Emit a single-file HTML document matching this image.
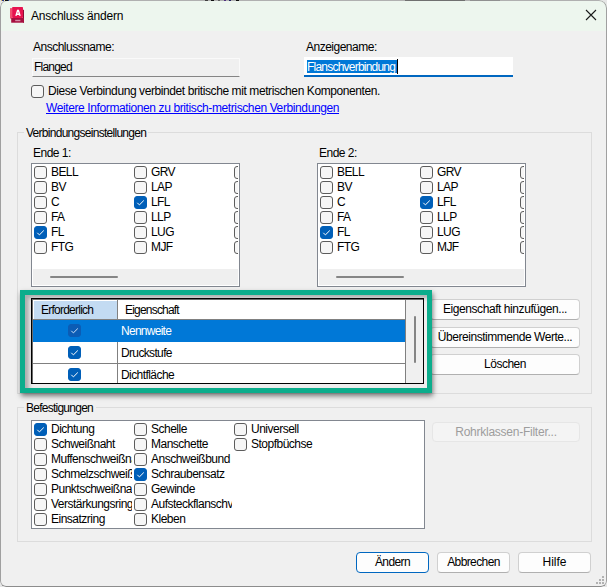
<!DOCTYPE html>
<html><head><meta charset="utf-8"><style>
html,body{margin:0;padding:0;width:607px;height:587px;overflow:hidden;background:#e6e6e6;}
*{box-sizing:border-box;}
#win{position:absolute;left:0;top:0;width:607px;height:587px;border-radius:7px 8px 6px 6px;background:#f0f0f0;overflow:hidden;}
#frame{position:absolute;left:0;top:0;width:607px;height:587px;border:1px solid #a0a0a0;border-top-color:#b0b0b0;border-bottom-color:#8c8c8c;border-radius:7px 8px 6px 6px;}
#title{position:absolute;left:0;top:0;width:607px;height:31px;background:#edf6ee;}
.a{position:absolute;}
.t{position:absolute;font-family:"Liberation Sans",sans-serif;font-size:12px;line-height:12px;white-space:nowrap;color:#000;letter-spacing:-0.45px;}
.grp{position:absolute;border:1px solid #dcdcdc;}
.lb{position:absolute;border:1px solid #828790;background:#fff;overflow:hidden;}
.cb{position:absolute;width:13px;height:13px;border:1px solid #5c5c5c;border-radius:3px;background:#f6f6f6;}
.cb.on{background:#005fb8;border-color:#005fb8;}
.btn{position:absolute;height:21px;border:1px solid #d0d0d0;border-bottom-color:#b0b0b0;border-radius:4px;background:#fdfdfd;}
.bt{position:absolute;left:0;right:0;text-align:center;font-family:"Liberation Sans",sans-serif;font-size:12px;line-height:12px;white-space:nowrap;letter-spacing:-0.45px;color:#000;}
</style></head><body><div id="win"><div id='title'></div><svg class='a' style='left:8px;top:5px' width='18' height='20' viewBox='0 0 18 20'><rect x='2' y='3.1' width='2.2' height='10.5' fill='#f0506f'/><rect x='15' y='4.8' width='1' height='12.9' fill='#8e0b33'/><rect x='3.2' y='13' width='12.8' height='4.7' fill='#a50f3e'/><rect x='4.1' y='1.9' width='10.9' height='11.2' rx='0.8' fill='#e7134f'/><path d='M7.9 10.9 L9.5 5.8 Q10 4.6 10.5 5.8 L12.1 10.9 M9 9.2 L11 9.2' stroke='#fff' stroke-width='1.4' fill='none' stroke-linejoin='round'/><rect x='7.2' y='14.8' width='5.2' height='1.4' fill='#d98aa6'/></svg><div class='t' style='left:31px;top:10px;letter-spacing:-0.2px;'>Anschluss ändern</div><svg class='a' style='left:585px;top:9px;' width='12' height='12'><path d='M1 1L11 11M11 1L1 11' stroke='#1a1a1a' stroke-width='1.1'/></svg><div class='t' style='left:33px;top:41px;letter-spacing:-0.5px;'>Anschlussname:</div><div class='a' style='left:32px;top:58px;width:208px;height:19px;border:1px solid #fafafa;border-bottom-color:#858585;border-radius:1px;background:#f0f0f0;'></div><div class='t' style='left:34px;top:61px;letter-spacing:-0.8px;'>Flanged</div><div class='t' style='left:306px;top:41px;letter-spacing:-0.5px;'>Anzeigename:</div><div class='a' style='left:304px;top:57px;width:209px;height:20px;background:#fff;border-bottom:2px solid #0067c0;'></div><div class='a' style='left:307px;top:60px;width:90px;height:13px;background:#0078d7;'></div><div class='t' style='left:307px;top:61px;color:#fff;letter-spacing:-0.78px;'>Flanschverbindung</div><div class='a' style='left:397px;top:59px;width:1px;height:15px;background:#000;'></div><div class='cb' style='left:31px;top:85px;'></div><div class='t' style='left:48px;top:85px;letter-spacing:-0.41px;'>Diese Verbindung verbindet britische mit metrischen Komponenten.</div><div class='t' style='left:46px;top:102px;color:#0000ff;text-decoration:underline;letter-spacing:-0.39px;'>Weitere Informationen zu britisch-metrischen Verbindungen</div><div class='grp' style='left:17px;top:132px;width:575px;height:262px;'></div><div class='a' style='left:24px;top:126px;width:124px;height:14px;background:#f0f0f0;'></div><div class='t' style='left:26px;top:127px;letter-spacing:-0.72px;'>Verbindungseinstellungen</div><div class='t' style='left:33px;top:147px;letter-spacing:-0.5px;'>Ende 1:</div><div class='t' style='left:319px;top:147px;letter-spacing:-0.5px;'>Ende 2:</div><div class='lb' style='left:31px;top:163px;width:209px;height:124px;'><div class='cb' style='left:2px;top:2px;'></div><div class='t' style='left:19px;top:2px;letter-spacing:-0.6px;'>BELL</div><div class='cb' style='left:102px;top:2px;'></div><div class='t' style='left:119px;top:2px;letter-spacing:-0.6px;'>GRV</div><div class='a' style='left:200px;top:2px;width:6px;height:13px;overflow:hidden;'><div class='cb' style='left:2px;top:0px;'></div></div><div class='cb' style='left:2px;top:17px;'></div><div class='t' style='left:19px;top:17px;letter-spacing:-0.6px;'>BV</div><div class='cb' style='left:102px;top:17px;'></div><div class='t' style='left:119px;top:17px;letter-spacing:-0.6px;'>LAP</div><div class='a' style='left:200px;top:17px;width:6px;height:13px;overflow:hidden;'><div class='cb' style='left:2px;top:0px;'></div></div><div class='cb' style='left:2px;top:32px;'></div><div class='t' style='left:19px;top:32px;letter-spacing:-0.6px;'>C</div><div class='cb on' style='left:102px;top:32px;'><svg width='13' height='13' style='position:absolute;left:-1px;top:-1px'><path d='M3.3 6.8 L5.4 8.9 L9.8 4.5' stroke='#fff' stroke-width='1' fill='none'/></svg></div><div class='t' style='left:119px;top:32px;letter-spacing:-0.6px;'>LFL</div><div class='a' style='left:200px;top:32px;width:6px;height:13px;overflow:hidden;'><div class='cb' style='left:2px;top:0px;'></div></div><div class='cb' style='left:2px;top:47px;'></div><div class='t' style='left:19px;top:47px;letter-spacing:-0.6px;'>FA</div><div class='cb' style='left:102px;top:47px;'></div><div class='t' style='left:119px;top:47px;letter-spacing:-0.6px;'>LLP</div><div class='a' style='left:200px;top:47px;width:6px;height:13px;overflow:hidden;'><div class='cb' style='left:2px;top:0px;'></div></div><div class='cb on' style='left:2px;top:62px;'><svg width='13' height='13' style='position:absolute;left:-1px;top:-1px'><path d='M3.3 6.8 L5.4 8.9 L9.8 4.5' stroke='#fff' stroke-width='1' fill='none'/></svg></div><div class='t' style='left:19px;top:62px;letter-spacing:-0.6px;'>FL</div><div class='cb' style='left:102px;top:62px;'></div><div class='t' style='left:119px;top:62px;letter-spacing:-0.6px;'>LUG</div><div class='a' style='left:200px;top:62px;width:6px;height:13px;overflow:hidden;'><div class='cb' style='left:2px;top:0px;'></div></div><div class='cb' style='left:2px;top:77px;'></div><div class='t' style='left:19px;top:77px;letter-spacing:-0.6px;'>FTG</div><div class='cb' style='left:102px;top:77px;'></div><div class='t' style='left:119px;top:77px;letter-spacing:-0.6px;'>MJF</div><div class='a' style='left:200px;top:77px;width:6px;height:13px;overflow:hidden;'><div class='cb' style='left:2px;top:0px;'></div></div><div class='a' style='left:1px;top:105px;width:205px;height:16px;background:#efefef;'></div><div class='a' style='left:18px;top:112px;width:68px;height:2px;background:#858585;border-radius:1px;'></div></div><div class='lb' style='left:317px;top:163px;width:209px;height:124px;'><div class='cb' style='left:2px;top:2px;'></div><div class='t' style='left:19px;top:2px;letter-spacing:-0.6px;'>BELL</div><div class='cb' style='left:102px;top:2px;'></div><div class='t' style='left:119px;top:2px;letter-spacing:-0.6px;'>GRV</div><div class='a' style='left:200px;top:2px;width:6px;height:13px;overflow:hidden;'><div class='cb' style='left:2px;top:0px;'></div></div><div class='cb' style='left:2px;top:17px;'></div><div class='t' style='left:19px;top:17px;letter-spacing:-0.6px;'>BV</div><div class='cb' style='left:102px;top:17px;'></div><div class='t' style='left:119px;top:17px;letter-spacing:-0.6px;'>LAP</div><div class='a' style='left:200px;top:17px;width:6px;height:13px;overflow:hidden;'><div class='cb' style='left:2px;top:0px;'></div></div><div class='cb' style='left:2px;top:32px;'></div><div class='t' style='left:19px;top:32px;letter-spacing:-0.6px;'>C</div><div class='cb on' style='left:102px;top:32px;'><svg width='13' height='13' style='position:absolute;left:-1px;top:-1px'><path d='M3.3 6.8 L5.4 8.9 L9.8 4.5' stroke='#fff' stroke-width='1' fill='none'/></svg></div><div class='t' style='left:119px;top:32px;letter-spacing:-0.6px;'>LFL</div><div class='a' style='left:200px;top:32px;width:6px;height:13px;overflow:hidden;'><div class='cb' style='left:2px;top:0px;'></div></div><div class='cb' style='left:2px;top:47px;'></div><div class='t' style='left:19px;top:47px;letter-spacing:-0.6px;'>FA</div><div class='cb' style='left:102px;top:47px;'></div><div class='t' style='left:119px;top:47px;letter-spacing:-0.6px;'>LLP</div><div class='a' style='left:200px;top:47px;width:6px;height:13px;overflow:hidden;'><div class='cb' style='left:2px;top:0px;'></div></div><div class='cb on' style='left:2px;top:62px;'><svg width='13' height='13' style='position:absolute;left:-1px;top:-1px'><path d='M3.3 6.8 L5.4 8.9 L9.8 4.5' stroke='#fff' stroke-width='1' fill='none'/></svg></div><div class='t' style='left:19px;top:62px;letter-spacing:-0.6px;'>FL</div><div class='cb' style='left:102px;top:62px;'></div><div class='t' style='left:119px;top:62px;letter-spacing:-0.6px;'>LUG</div><div class='a' style='left:200px;top:62px;width:6px;height:13px;overflow:hidden;'><div class='cb' style='left:2px;top:0px;'></div></div><div class='cb' style='left:2px;top:77px;'></div><div class='t' style='left:19px;top:77px;letter-spacing:-0.6px;'>FTG</div><div class='cb' style='left:102px;top:77px;'></div><div class='t' style='left:119px;top:77px;letter-spacing:-0.6px;'>MJF</div><div class='a' style='left:200px;top:77px;width:6px;height:13px;overflow:hidden;'><div class='cb' style='left:2px;top:0px;'></div></div><div class='a' style='left:1px;top:105px;width:205px;height:16px;background:#efefef;'></div><div class='a' style='left:18px;top:112px;width:68px;height:2px;background:#858585;border-radius:1px;'></div></div><div class='btn' style='left:430px;top:299px;width:150px;'><div class='bt' style='top:3px;letter-spacing:-0.43px;'>Eigenschaft hinzufügen...</div></div><div class='btn' style='left:430px;top:327px;width:150px;'><div class='bt' style='top:3px;letter-spacing:-0.46px;'>Übereinstimmende Werte...</div></div><div class='btn' style='left:430px;top:354px;width:150px;'><div class='bt' style='top:3px;letter-spacing:-0.5px;'>Löschen</div></div><div class='a' style='left:20px;top:290px;width:412px;height:103px;border:5px solid #0cad8c;box-shadow:1px 3px 5px rgba(0,0,0,0.5);'></div><div class='a' style='left:25px;top:295px;width:402px;height:93px;background:#eeeeee;box-shadow:inset 4px 3px 4px rgba(0,0,0,0.28);'></div><div class='a' style='left:31px;top:298px;width:393px;height:86px;border:1px solid #000;background:#fff;overflow:hidden;'><div class='a' style='left:0;top:0;width:391px;height:1px;background:#6a6a6a;'></div><div class='a' style='left:0;top:0;width:1px;height:84px;background:#6a6a6a;'></div><div class='a' style='left:1px;top:1px;width:84px;height:19px;background:#c3dbf2;border-left:1px solid #fff;border-top:1px solid #fff;'></div><div class='a' style='left:85px;top:1px;width:1px;height:83px;background:#808080;'></div><div class='a' style='left:1px;top:20px;width:372px;height:1px;background:#808080;'></div><div class='a' style='left:1px;top:21px;width:372px;height:22px;background:#0078d7;'></div><div class='a' style='left:1px;top:64px;width:372px;height:1px;background:#808080;'></div><div class='a' style='left:373px;top:1px;width:1px;height:83px;background:#808080;'></div><div class='a' style='left:374px;top:1px;width:17px;height:83px;background:#f0f0f0;'></div><div class='a' style='left:382px;top:17px;width:2px;height:47px;background:#858585;border-radius:1px;'></div></div><div class='t' style='left:41px;top:304px;letter-spacing:-0.76px;'>Erforderlich</div><div class='t' style='left:125px;top:304px;letter-spacing:-0.8px;'>Eigenschaft</div><div class='cb on' style='left:68px;top:324px;background:#0b5cb5;border-color:#0b5cb5;'><svg width='13' height='13' style='position:absolute;left:-1px;top:-1px'><path d='M3.3 6.8 L5.4 8.9 L9.8 4.5' stroke='#cfe2f7' stroke-width='1' fill='none'/></svg></div><div class='t' style='left:121px;top:325px;color:#fff;letter-spacing:-0.73px;'>Nennweite</div><div class='cb on' style='left:68px;top:346px;'><svg width='13' height='13' style='position:absolute;left:-1px;top:-1px'><path d='M3.3 6.8 L5.4 8.9 L9.8 4.5' stroke='#fff' stroke-width='1' fill='none'/></svg></div><div class='t' style='left:121px;top:347px;letter-spacing:-0.65px;'>Druckstufe</div><div class='cb on' style='left:68px;top:368px;'><svg width='13' height='13' style='position:absolute;left:-1px;top:-1px'><path d='M3.3 6.8 L5.4 8.9 L9.8 4.5' stroke='#fff' stroke-width='1' fill='none'/></svg></div><div class='t' style='left:121px;top:369px;letter-spacing:-0.57px;'>Dichtfläche</div><div class='grp' style='left:17px;top:407px;width:575px;height:135px;'></div><div class='a' style='left:24px;top:401px;width:72px;height:14px;background:#f0f0f0;'></div><div class='t' style='left:26px;top:402px;letter-spacing:-0.75px;'>Befestigungen</div><div class='lb' style='left:31px;top:420px;width:394px;height:109px;'><div class='a' style='left:0;top:0;width:100px;height:107px;overflow:hidden;'><div class='cb on' style='left:2px;top:2px;'><svg width='13' height='13' style='position:absolute;left:-1px;top:-1px'><path d='M3.3 6.8 L5.4 8.9 L9.8 4.5' stroke='#fff' stroke-width='1' fill='none'/></svg></div><div class='t' style='left:19px;top:2px;letter-spacing:-0.5px;'>Dichtung</div></div><div class='a' style='left:0;top:0;width:100px;height:107px;overflow:hidden;'><div class='cb' style='left:2px;top:17px;'></div><div class='t' style='left:19px;top:17px;letter-spacing:-0.5px;'>Schweißnaht</div></div><div class='a' style='left:0;top:0;width:100px;height:107px;overflow:hidden;'><div class='cb' style='left:2px;top:32px;'></div><div class='t' style='left:19px;top:32px;letter-spacing:-0.5px;'>Muffenschweißnaht</div></div><div class='a' style='left:0;top:0;width:100px;height:107px;overflow:hidden;'><div class='cb' style='left:2px;top:47px;'></div><div class='t' style='left:19px;top:47px;letter-spacing:-0.5px;'>Schmelzschweißung</div></div><div class='a' style='left:0;top:0;width:100px;height:107px;overflow:hidden;'><div class='cb' style='left:2px;top:62px;'></div><div class='t' style='left:19px;top:62px;letter-spacing:-0.5px;'>Punktschweißnaht</div></div><div class='a' style='left:0;top:0;width:100px;height:107px;overflow:hidden;'><div class='cb' style='left:2px;top:77px;'></div><div class='t' style='left:19px;top:77px;letter-spacing:-0.5px;'>Verstärkungsring</div></div><div class='a' style='left:0;top:0;width:100px;height:107px;overflow:hidden;'><div class='cb' style='left:2px;top:92px;'></div><div class='t' style='left:19px;top:92px;letter-spacing:-0.5px;'>Einsatzring</div></div><div class='a' style='left:100px;top:0;width:100px;height:107px;overflow:hidden;'><div class='cb' style='left:2px;top:2px;'></div><div class='t' style='left:19px;top:2px;letter-spacing:-0.5px;'>Schelle</div></div><div class='a' style='left:100px;top:0;width:100px;height:107px;overflow:hidden;'><div class='cb' style='left:2px;top:17px;'></div><div class='t' style='left:19px;top:17px;letter-spacing:-0.5px;'>Manschette</div></div><div class='a' style='left:100px;top:0;width:100px;height:107px;overflow:hidden;'><div class='cb' style='left:2px;top:32px;'></div><div class='t' style='left:19px;top:32px;letter-spacing:-0.5px;'>Anschweißbund</div></div><div class='a' style='left:100px;top:0;width:100px;height:107px;overflow:hidden;'><div class='cb on' style='left:2px;top:47px;'><svg width='13' height='13' style='position:absolute;left:-1px;top:-1px'><path d='M3.3 6.8 L5.4 8.9 L9.8 4.5' stroke='#fff' stroke-width='1' fill='none'/></svg></div><div class='t' style='left:19px;top:47px;letter-spacing:-0.5px;'>Schraubensatz</div></div><div class='a' style='left:100px;top:0;width:100px;height:107px;overflow:hidden;'><div class='cb' style='left:2px;top:62px;'></div><div class='t' style='left:19px;top:62px;letter-spacing:-0.5px;'>Gewinde</div></div><div class='a' style='left:100px;top:0;width:100px;height:107px;overflow:hidden;'><div class='cb' style='left:2px;top:77px;'></div><div class='t' style='left:19px;top:77px;letter-spacing:-0.5px;'>Aufsteckflanschverbindung</div></div><div class='a' style='left:100px;top:0;width:100px;height:107px;overflow:hidden;'><div class='cb' style='left:2px;top:92px;'></div><div class='t' style='left:19px;top:92px;letter-spacing:-0.5px;'>Kleben</div></div><div class='cb' style='left:202px;top:2px;'></div><div class='t' style='left:219px;top:2px;letter-spacing:-0.5px;'>Universell</div><div class='cb' style='left:202px;top:17px;'></div><div class='t' style='left:219px;top:17px;letter-spacing:-0.5px;'>Stopfbüchse</div></div><div class='btn' style='left:432px;top:422px;width:148px;height:20px;background:#f4f4f4;border-color:#e6e6e6;'><div class='bt' style='top:3px;color:#9d9d9d;letter-spacing:-0.25px;'>Rohrklassen-Filter...</div></div><div class='btn' style='left:356px;top:552px;width:73px;border:1.5px solid #0067c0;'><div class='bt' style='top:3px;letter-spacing:-0.6px;'>Ändern</div></div><div class='btn' style='left:437px;top:552px;width:73px;'><div class='bt' style='top:3px;letter-spacing:-0.6px;'>Abbrechen</div></div><div class='btn' style='left:518px;top:552px;width:73px;'><div class='bt' style='top:3px;letter-spacing:0px;'>Hilfe</div></div><div class='a' style='left:602px;top:576px;width:2px;height:2px;background:#b2b2b2;'></div><div class='a' style='left:602px;top:579px;width:2px;height:2px;background:#b2b2b2;'></div><div class='a' style='left:599px;top:579px;width:2px;height:2px;background:#b2b2b2;'></div><div class='a' style='left:602px;top:582px;width:2px;height:2px;background:#b2b2b2;'></div><div class='a' style='left:599px;top:582px;width:2px;height:2px;background:#b2b2b2;'></div><div class='a' style='left:596px;top:582px;width:2px;height:2px;background:#b2b2b2;'></div><div id="frame"></div></div><div class='a' style='left:1px;top:0;width:1px;height:1px;background:#e0b860;'></div><div class='a' style='left:2px;top:0;width:2px;height:1px;background:#2a3a8a;'></div><div class='a' style='left:4px;top:0;width:1px;height:1px;background:#f0e0a0;'></div><div class='a' style='left:5px;top:0;width:3px;height:1px;background:#101010;'></div><div class='a' style='left:8px;top:0;width:1px;height:1px;background:#20408a;'></div><div class='a' style='left:205px;top:0;width:3px;height:1px;background:#404040;'></div><div class='a' style='left:211px;top:0;width:3px;height:1px;background:#101010;'></div><div class='a' style='left:218px;top:0;width:2px;height:1px;background:#606060;'></div><div class='a' style='left:224px;top:0;width:2px;height:1px;background:#503080;'></div><div class='a' style='left:229px;top:0;width:2px;height:1px;background:#202060;'></div><div class='a' style='left:236px;top:0;width:3px;height:1px;background:#101010;'></div><div class='a' style='left:405px;top:0;width:60px;height:1px;background:#707070;'></div><div class='a' style='left:470px;top:0;width:30px;height:1px;background:#909090;'></div></body></html>
